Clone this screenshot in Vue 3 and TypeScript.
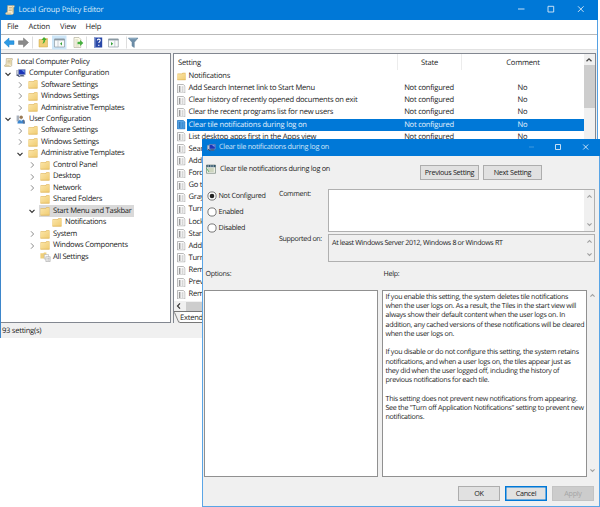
<script setup lang="ts">
import { ref } from 'vue'

interface TreeNode {
  label: string
  depth: number
  icon: 'scroll' | 'computer' | 'user' | 'folder' | 'all'
  arrow?: 'open' | 'closed'
  selected?: boolean
}

const tree: TreeNode[] = [
  { label: 'Local Computer Policy', depth: 0, icon: 'scroll' },
  { label: 'Computer Configuration', depth: 1, icon: 'computer', arrow: 'open' },
  { label: 'Software Settings', depth: 2, icon: 'folder', arrow: 'closed' },
  { label: 'Windows Settings', depth: 2, icon: 'folder', arrow: 'closed' },
  { label: 'Administrative Templates', depth: 2, icon: 'folder', arrow: 'closed' },
  { label: 'User Configuration', depth: 1, icon: 'user', arrow: 'open' },
  { label: 'Software Settings', depth: 2, icon: 'folder', arrow: 'closed' },
  { label: 'Windows Settings', depth: 2, icon: 'folder', arrow: 'closed' },
  { label: 'Administrative Templates', depth: 2, icon: 'folder', arrow: 'open' },
  { label: 'Control Panel', depth: 3, icon: 'folder', arrow: 'closed' },
  { label: 'Desktop', depth: 3, icon: 'folder', arrow: 'closed' },
  { label: 'Network', depth: 3, icon: 'folder', arrow: 'closed' },
  { label: 'Shared Folders', depth: 3, icon: 'folder' },
  { label: 'Start Menu and Taskbar', depth: 3, icon: 'folder', arrow: 'open', selected: true },
  { label: 'Notifications', depth: 4, icon: 'folder' },
  { label: 'System', depth: 3, icon: 'folder', arrow: 'closed' },
  { label: 'Windows Components', depth: 3, icon: 'folder', arrow: 'closed' },
  { label: 'All Settings', depth: 3, icon: 'all' },
]

interface Setting { name: string; state?: string; comment?: string }

const settings: Setting[] = [
  { name: 'Add Search Internet link to Start Menu', state: 'Not configured', comment: 'No' },
  { name: 'Clear history of recently opened documents on exit', state: 'Not configured', comment: 'No' },
  { name: 'Clear the recent programs list for new users', state: 'Not configured', comment: 'No' },
  { name: 'Clear tile notifications during log on', state: 'Not configured', comment: 'No' },
  { name: 'List desktop apps first in the Apps view', state: 'Not configured', comment: 'No' },
  { name: 'Sear' },
  { name: 'Add' },
  { name: 'Forc' },
  { name: 'Go t' },
  { name: 'Gray' },
  { name: 'Turn' },
  { name: 'Lock' },
  { name: 'Start' },
  { name: 'Add' },
  { name: 'Turn' },
  { name: 'Rem' },
  { name: 'Prev' },
  { name: 'Rem' },
]
const selectedRow = 3

const states = ['Not Configured', 'Enabled', 'Disabled']
const state = ref('Not Configured')

const help: string[] = [
  'If you enable this setting, the system deletes tile notifications',
  'when the user logs on. As a result, the Tiles in the start view will',
  'always show their default content when the user logs on. In',
  'addition, any cached versions of these notifications will be cleared',
  'when the user logs on.',
  '',
  'If you disable or do not configure this setting, the system retains',
  'notifications, and when a user logs on, the tiles appear just as',
  'they did when the user logged off, including the history of',
  'previous notifications for each tile.',
  '',
  'This setting does not prevent new notifications from appearing.',
  'See the "Turn off Application Notifications" setting to prevent new',
  'notifications.',
]
</script>

<template>
  <div class="desktop">
    <svg class="defs" width="0" height="0">
      <defs>
        <linearGradient id="fold" x1="0" y1="0" x2="1" y2="1">
          <stop offset="0" stop-color="#fbe5a8" />
          <stop offset="1" stop-color="#f0cc72" />
        </linearGradient>
        <symbol id="i-folder" viewBox="0 0 10 9">
          <path d="M.5 1.2h5l.8-.9h3.2v8h-9z" fill="#e3bb60" />
          <path d="M.5 1.9h5.300l.8-.8h2.700v7.200H.5z" fill="url(#fold)" />
          <path d="M.5 8.200h9" stroke="#dcae4c" stroke-width=".6" />
        </symbol>
        <symbol id="i-scroll" viewBox="0 0 10 10">
          <path d="M2.600.6h6.600c.6.9.3 1.800-.6 2v5.200c0 1.200-.7 1.700-1.500 1.700H1.200C.2 9.300.2 7.800 1.500 7.600h.8z" fill="#f5ecd2" stroke="#a89c7c" stroke-width=".6" />
          <path d="M1.400 9.300h5.300c-.8-.5-.8-1.200-.4-1.700H1.500z" fill="#dfcf9f" />
          <path d="M3.800 2.500h3.200M3.700 4h3.200M3.600 5.500h3.200" stroke="#bba977" stroke-width=".7" />
          <path d="M7.600.8v6.700" stroke="#d7c17f" stroke-width=".7" />
        </symbol>
        <symbol id="i-computer" viewBox="0 0 10 9">
          <path d="M.3 1.500h2.600v5H.3z" fill="#c8ccd6" stroke="#7a8294" stroke-width=".4" />
          <path d="M2.600.5h6.600v5.200H2.600z" fill="#1c35b8" stroke="#8c98b8" stroke-width=".7" />
          <path d="M5.500 1.200h3v2.500z" fill="#6f9cf0" />
          <path d="M4.500 6h3l1 1.600H3.600z" fill="#59627c" />
          <path d="M1 5.800l2.600 1.900" stroke="#3c4868" stroke-width="1.100" />
        </symbol>
        <symbol id="i-user" viewBox="0 0 10 9">
          <path d="M.6.500h2.600v6H.6z" fill="#a8b0bc" />
          <circle cx="5.200" cy="2.200" r="1.700" fill="#9a7a55" />
          <path d="M1.400 8.400c0-5 7.400-5 7.600 0z" fill="#3b86cf" />
          <path d="M7 4.300l1.700 1.200v2.900H6.800z" fill="#5a6f90" />
          <path d="M4 4.600l1.200 2 1.200-2z" fill="#d9e8f5" />
        </symbol>
        <symbol id="i-all" viewBox="0 0 11 10">
          <path d="M.4 1.200h3l.6-.8h2.400v6h-6z" fill="#efcf7b" />
          <path d="M4.300 2.500h4.200v4.600H4.300z" fill="#fafafa" stroke="#a7a7a7" stroke-width=".5" />
          <path d="M5.800 4.700h4.400v4.800H5.800z" fill="#f4f4f4" stroke="#999" stroke-width=".5" />
          <path d="M6.800 6.300h.7M8.200 6.300h1.200M6.800 8h.7M8.200 8h1.200" stroke="#777" stroke-width=".6" />
        </symbol>
        <symbol id="i-page" viewBox="0 0 9 10">
          <path d="M.5.500h6.200l1.800 1.800v7.200h-8z" fill="#fbfbfb" stroke="#a2a2a2" stroke-width=".8" />
          <path d="M2 3.200h1.600M2 5.300h1.600M2 7.400h1.600" stroke="#3a3a3a" stroke-width="1.200" />
          <path d="M5 3.200h1.800M5 5.300h1.800M5 7.400h1.800" stroke="#9c9c9c" stroke-width=".8" />
        </symbol>
        <symbol id="i-page-sel" viewBox="0 0 9 10">
          <path d="M.5.500h6.200l1.800 1.800v7.200h-8z" fill="#58a5e4" stroke="#2176c4" stroke-width=".8" />
          <path d="M2 3.200h1.600M2 5.300h1.600M2 7.400h1.600" stroke="#0b4f93" stroke-width="1.200" />
          <path d="M5 3.200h1.800M5 5.300h1.800M5 7.400h1.800" stroke="#1f6db5" stroke-width=".8" />
        </symbol>
        <symbol id="i-up" viewBox="0 0 8 6"><path d="M1.500 4.300L4 1.800l2.500 2.500" fill="none" stroke="currentColor" stroke-width="1.300" /></symbol>
        <symbol id="i-down" viewBox="0 0 8 6"><path d="M1.500 1.700L4 4.200l2.500-2.500" fill="none" stroke="currentColor" stroke-width="1.300" /></symbol>
      </defs>
    </svg>

    <main class="window">
      <header class="titlebar">
        <svg class="app-icon"><use href="#i-scroll" /></svg>
        <span class="title">Local Group Policy Editor</span>
        <svg class="caption" viewBox="0 0 70 10">
          <path d="M1 5h6.500" /><path d="M31 2.300h5.700v5.700H31z" /><path d="M61 2.300l5.600 5.600M66.600 2.300l-5.600 5.600" />
        </svg>
      </header>
      <nav class="menubar">
        <span class="m-file">File</span><span class="m-action">Action</span><span class="m-view">View</span><span>Help</span>
      </nav>
      <div class="toolbar">
        <svg class="tools" viewBox="0 0 145 15">
          <path d="M3 7.500L8 3v2.800h5v3.600H8v2.800z" fill="#2e9be6" stroke="#187cc4" stroke-width=".5" />
          <path d="M27.500 7.500L22.500 3v2.800h-5v3.600h5v2.800z" fill="#8b8b8b" stroke="#707070" stroke-width=".5" />
          <path d="M31.500 1.500v12M85.500 1.500v12M125.500 1.500v12" stroke="#d5d5d5" stroke-width=".8" />
          <path d="M38 4.500h3l1-1h4.500v8.500H38z" fill="#f0ce74" stroke="#cda745" stroke-width=".5" />
          <path d="M43 2l2.800 3h-1.600c0 2-.8 3.200-3 3.800 1-1 1.300-2.200 1.300-3.800h-1.900z" fill="#43ae32" />
          <path d="M51 .5h14.500v14H51z" fill="#cde6f8" />
          <path d="M53.500 4h10v8h-10z" fill="#f8fafb" stroke="#7e8b94" stroke-width=".6" />
          <path d="M53.500 3.800h10v1.600h-10z" fill="#8b99a3" />
          <path d="M57 5.500v6.500" stroke="#a9b4bb" stroke-width=".6" />
          <path d="M61 7v3.500l-2-1.700z" fill="#37a23a" />
          <path d="M73 2.500h5l1.800 1.800V12.500H73z" fill="#fdfbea" stroke="#aaa894" stroke-width=".6" />
          <path d="M74.300 5h3M74.300 7h2M74.300 9h2.400M74.300 11h4" stroke="#b5b29a" stroke-width=".6" />
          <path d="M76.500 6.700h2.600V5l3.200 3-3.200 3V9.300h-2.600z" fill="#45b03e" />
          <path d="M93 2.500h8.200v10H93z" fill="#2948a8" />
          <path d="M93 2.500h1.500v10H93z" fill="#8095ce" />
          <path d="M96.300 5.400c.1-1.700 3-1.600 2.900 0 0 1.200-1.400 1.200-1.400 2.600M97.800 9.700v1.300" fill="none" stroke="#fff" stroke-width="1.100" />
          <path d="M107.500 4h9.800v8h-9.800z" fill="#f8fafb" stroke="#7e8b94" stroke-width=".6" />
          <path d="M107.500 3.800h9.800v1.600h-9.800z" fill="#8b99a3" />
          <path d="M113.800 5.500v6.500" stroke="#a9b4bb" stroke-width=".6" />
          <path d="M110 7v3.500l2.200-1.700z" fill="#37a23a" />
          <path d="M127.300 3h9.700l-3.700 4.300v5.200l-2.300-1.400V7.300z" fill="#6f8fa9" stroke="#5b7c97" stroke-width=".5" />
          <path d="M128.500 3.700h7" stroke="#a9c2d6" stroke-width=".7" />
        </svg>
      </div>
      <div class="panes">
        <ul class="tree">
          <li v-for="(n, i) in tree" :key="i" :class="'d' + n.depth">
            <svg class="twist" viewBox="0 0 8 8">
              <path v-if="n.arrow === 'open'" d="M1.500 2.800L4 5.300l2.500-2.500" class="open" />
              <path v-else-if="n.arrow === 'closed'" d="M3 1.300L5.600 4 3 6.700" class="closed" />
            </svg>
            <span class="node" :class="{ selected: n.selected }">
              <svg class="node-icon" :class="n.icon"><use :href="'#i-' + n.icon" /></svg>
              <span>{{ n.label }}</span>
            </span>
          </li>
        </ul>
        <section class="list">
          <div class="list-body">
            <div class="cols">
              <div class="head"><span>Setting</span><span class="c sep">State</span><span class="c sep">Comment</span></div>
              <div class="row">
                <span class="name"><svg class="fold"><use href="#i-folder" /></svg><b>Notifications</b></span>
              </div>
              <div v-for="(s, i) in settings" :key="i" class="row" :class="{ selected: i === selectedRow }">
                <span class="name">
                  <svg class="page"><use :href="i === selectedRow ? '#i-page-sel' : '#i-page'" /></svg><b>{{ s.name }}</b>
                </span>
                <span v-if="s.state" class="c">{{ s.state }}</span>
                <span v-if="s.comment" class="c">{{ s.comment }}</span>
              </div>
            </div>
            <div class="vscroll">
              <svg class="chev"><use href="#i-up" /></svg>
              <i class="thumb"></i>
            </div>
          </div>
          <div class="hscroll">
            <svg viewBox="0 0 8 8"><path d="M5 1.300L2.500 4 5 6.700" fill="none" stroke="#333" stroke-width="1.200" /></svg>
            <i></i>
          </div>
          <div class="tabs">
            <svg viewBox="0 0 7 12"><path d="M.5 0l5 11.500H7" fill="none" stroke="#555" stroke-width=".8" /></svg>
            <span>Extended</span>
          </div>
        </section>
      </div>
      <footer class="status">93 setting(s)</footer>
    </main>

    <div class="dialog">
      <header class="dlg-title">
        <svg class="app-icon"><use href="#i-computer" /></svg>
        <span>Clear tile notifications during log on</span>
        <svg class="caption" viewBox="0 0 70 10">
          <path d="M7 5h5" class="dim" /><path d="M33.500 2.500h5v5h-5z" /><path d="M61.200 2.500l5 5M66.200 2.500l-5 5" />
        </svg>
      </header>
      <div class="dlg-head">
        <svg class="head-icon" viewBox="0 0 10 10">
          <path d="M.5 1h9v8.300h-9z" fill="#edf0e6" stroke="#75857c" stroke-width=".7" />
          <path d="M.5 1h9v2.200h-9z" fill="#33556b" />
          <path d="M1.500 2h1.500M4 2h1.500M6.500 2h1.500" stroke="#dce8ee" stroke-width=".8" />
          <path d="M2 5h5.800M2 7h5.800" stroke="#9dab84" stroke-width=".8" />
          <path d="M.5 4.200l2.300 3.600" stroke="#45a15a" stroke-width=".8" />
        </svg>
        <span>Clear tile notifications during log on</span>
        <button class="btn prev">Previous Setting</button>
        <button class="btn next">Next Setting</button>
      </div>
      <div class="form">
        <div class="radios">
          <label v-for="s in states" :key="s" @click="state = s">
            <svg viewBox="0 0 10 10">
              <circle cx="5" cy="5" r="4.100" fill="#fff" stroke="#444" stroke-width=".7" />
              <circle v-if="s === state" cx="5" cy="5" r="2.300" fill="#222" />
            </svg>
            <span>{{ s }}</span>
          </label>
        </div>
        <div class="labels"><span>Comment:</span><span>Supported on:</span></div>
        <div class="fields">
          <div class="field comment"><span></span><div class="mini"><svg><use href="#i-up" /></svg><svg><use href="#i-down" /></svg></div></div>
          <div class="field supported"><span>At least Windows Server 2012, Windows 8 or Windows RT</span><div class="mini"><svg><use href="#i-up" /></svg><svg><use href="#i-down" /></svg></div></div>
        </div>
      </div>
      <div class="captions"><span>Options:</span><span>Help:</span></div>
      <div class="boxes">
        <div class="box options"></div>
        <div class="box help"><p v-for="(l, i) in help" :key="i">{{ l }}</p></div>
        <div class="mini side"><svg><use href="#i-up" /></svg><svg><use href="#i-down" /></svg></div>
      </div>
      <div class="actions">
        <button class="btn">OK</button>
        <button class="btn focus">Cancel</button>
        <button class="btn off">Apply</button>
      </div>
    </div>
  </div>
</template>

<style>
body { margin: 0; background: #fff; overflow: hidden; }
</style>

<style scoped>
* { box-sizing: border-box; }
.desktop { position: relative; width: 600px; height: 507px; background: #fff; overflow: hidden; font-family: "Open Sans", "Noto Sans", sans-serif; font-size: 7.600px; letter-spacing: -.24px; line-height: 1; color: #1b1b1b; white-space: nowrap; text-rendering: geometricPrecision; }
.defs { position: absolute; }
svg { display: block; flex: none; }
.window { width: 598px; height: 338px; display: flex; flex-direction: column; border-left: 1px solid #3d86cb; border-right: 1px solid #55a1e3; background: #f0f0f0; }
.titlebar { height: 20px; flex: none; background: #0078d7; color: #dcebf8; display: flex; align-items: center; padding-left: 5px; margin: 0 -1px; }
.titlebar .app-icon { width: 10px; height: 10px; margin-right: 3.500px; }
.titlebar .title { font-size: 7.700px; letter-spacing: -.18px; padding-top: 1px; }
.caption { width: 70px; height: 10px; margin-left: auto; fill: none; stroke: #dcebf8; stroke-width: .9; }
.titlebar .caption { margin-right: 11px; margin-bottom: 3px; }
.menubar { height: 14px; flex: none; background: #fff; display: flex; align-items: center; padding: 2px 0 0 6px; letter-spacing: -.15px; }
.m-file { width: 21.500px; } .m-action { width: 31.500px; } .m-view { width: 25.500px; }
.toolbar { height: 16px; flex: none; background: #fff; border-top: 1px solid #b9b9b9; border-bottom: 1px solid #e2e2e2; }
.tools { width: 145px; height: 15px; }
.panes { height: 273px; flex: none; padding-top: 3px; display: flex; }
.tree { width: 170px; height: 270px; flex: none; margin: 0; padding: 2.300px 0 0 3px; list-style: none; background: #fff; border-top: 1px solid #828790; border-right: 1px solid #828790; border-bottom: 1px solid #828790; letter-spacing: -.28px; }
.tree li { height: 11.480px; display: flex; align-items: center; }
.twist { width: 8px; height: 8px; fill: none; stroke-width: 1; }
.open { stroke: #333; stroke-width: 1.200; } .closed { stroke: #8c8c8c; }
.node { display: flex; align-items: center; height: 11.300px; padding: 0 2px 0 1px; }
.node span { padding-top: .8px; }
.node.selected { background: #d9d9d9; }
.node-icon { width: 10px; height: 9px; margin-right: 3px; }
.d0 .twist { display: none; }
.d0 .node { padding-left: 0; } .d0 .node-icon { width: 9px; margin-right: 4px; }
.d1 .node { padding-left: 4px; }
.d2 { padding-left: 12px; } .d3 { padding-left: 24px; } .d4 { padding-left: 36px; }
.d2 .node, .d3 .node, .d4 .node { padding-left: 4px; }
.d3 .node.selected { padding-left: 1px; margin-left: 3px; }
.node-icon.all { width: 11px; height: 10px; margin-right: 2px; }
.list { width: 423px; height: 270px; margin-left: 2px; background: #fff; border: 1px solid #828790; border-bottom: 0; display: flex; flex-direction: column; }
.list-body { height: 247px; flex: none; display: flex; overflow: hidden; }
.cols { width: 410px; flex: none; }
.head { height: 16.200px; }
.head, .row { display: grid; grid-template-columns: 223px 64px 1fr; align-items: center; }
.head > span { padding-top: 2.500px; }
.head > span:first-child { padding-left: 4px; }
.head .sep { border-left: 1px solid #ececec; height: 16px; display: grid; place-content: center; }
.c { text-align: center; }
.row { height: 12.130px; }
.row > .c, .name b { padding-top: 1.200px; }
.name { display: flex; align-items: center; height: 100%; padding-left: 3px; }
.name b { font-weight: 400; }
.fold { width: 9px; height: 9px; margin-right: 2.500px; }
.page { width: 8.500px; height: 9.500px; margin-right: 3px; }
.row.selected { color: #e3f1fd; background: linear-gradient(#0078d7, #0078d7) 13px 0 / 100% 100% no-repeat; }
.row.selected b { letter-spacing: -.19px; }
.vscroll { width: 11px; background: #f0f0f0; color: #444; }
.chev { width: 8px; height: 6px; margin: 3px 1px 2px; }
.thumb { display: block; height: 43px; background: #cdcdcd; }
.hscroll { height: 10px; flex: none; display: flex; align-items: center; background: #f0f0f0; }
.hscroll svg { width: 8px; height: 8px; margin: 0 3px 0 1px; }
.hscroll i { flex: 1; height: 9px; background: #cdcdcd; }
.tabs { flex: 1; display: flex; border-top: 1px solid #777; background: #f0f0f0; }
.tabs svg { width: 6px; height: 11px; }
.tabs span { background: #fff; height: 11px; line-height: 12px; border-bottom: 1px solid #777; }
.status { flex: 1; display: flex; align-items: center; padding: 3.500px 0 0 1px; letter-spacing: -.27px; }

.dialog { position: absolute; left: 202px; top: 139px; width: 398px; height: 368px; border: 1px solid #5aa5e6; border-top: 0; background: #f0f0f0; font-size: 7.100px; letter-spacing: -.28px; }
.dlg-title { height: 17px; background: #0078d7; color: #d0e5f8; display: flex; align-items: center; margin: 0 -1px; padding-left: 5px; font-size: 7.300px; }
.dlg-title span { padding-top: 1px; }
.dlg-title .app-icon { width: 9px; height: 8px; margin-right: 3px; }
.dlg-title .caption { margin: 0 8px 2px auto; }
.dlg-title .dim { opacity: .3; }
.dlg-head { height: 31px; display: flex; align-items: flex-start; padding: 8px 0 0 3px; font-size: 7.300px; }
.head-icon { width: 10px; height: 10px; margin-right: 4px; }
.dlg-head span { line-height: 9px; width: 200px; padding-top: 1px; }
.btn { font: inherit; font-size: 7.200px; letter-spacing: -.28px; color: #1b1b1b; background: #e1e1e1; border: 1px solid #adadad; padding: 0; height: 15px; line-height: 1; text-align: center; }
.prev { width: 59px; margin: 1px 4px 0 0; } .next { width: 59px; margin-top: 1px; }
.form { height: 78px; display: flex; }
.radios { width: 76px; padding: 1px 0 0 4px; }
.radios label { display: flex; align-items: center; height: 16.200px; font-size: 7.200px; letter-spacing: -.3px; }
.radios span { padding-top: .6px; }
.radios svg { width: 10px; height: 10px; margin-right: 1.500px; }
.labels { width: 49px; display: flex; flex-direction: column; padding-top: 3.500px; gap: 38px; font-size: 7.100px; letter-spacing: -.34px; }
.fields { width: 267px; padding-top: 2px; }
.field { border: 1px solid #b0b0b0; display: flex; justify-content: space-between; }
.comment { height: 43px; background: #fff; margin-bottom: 2px; }
.supported { height: 28px; }
.supported span { padding: 4.500px 0 0 3px; letter-spacing: -.34px; }
.mini { width: 10px; display: flex; flex-direction: column; justify-content: space-between; align-items: center; padding: 4px 0; color: #a0a0a0; background: #f0f0f0; }
.mini svg { width: 7px; height: 5px; }
.captions { height: 25px; display: flex; padding: 6px 0 0 2.500px; }
.captions span:first-child { width: 178px; }
.boxes { height: 187px; display: flex; padding-left: 1px; }
.box { border: 1px solid #909090; background: #fff; height: 187px; flex: none; }
.options { width: 174px; margin-right: 4px; }
.help { width: 205px; padding: 1.800px 0 0 2.500px; }
.help p { margin: 0; height: 9.280px; line-height: 9.280px; }
.side { padding: 3px 0; height: 186px; }
.actions { display: flex; justify-content: flex-end; gap: 5px; padding: 9px 5px 0 0; }
.actions .btn { width: 42px; }
.btn.focus { border: 1.500px solid #0078d7; box-shadow: inset 0 0 0 .5px #0078d7; }
.btn.off { background: #ccc; border-color: #c3c3c3; color: #a6a6a6; }
</style>
